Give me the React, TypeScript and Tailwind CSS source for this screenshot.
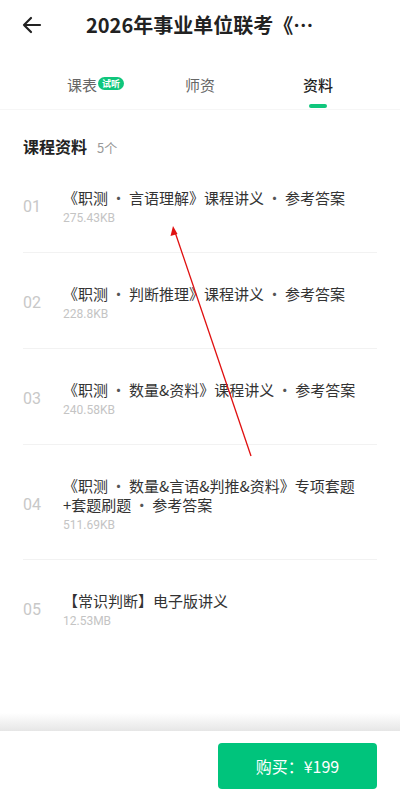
import React from "react";

const items = [
  { no: "01", lines: ["《职测 · 言语理解》课程讲义 · 参考答案"], size: "275.43KB" },
  { no: "02", lines: ["《职测 · 判断推理》课程讲义 · 参考答案"], size: "228.8KB" },
  { no: "03", lines: ["《职测 · 数量&资料》课程讲义 · 参考答案"], size: "240.58KB" },
  { no: "04", lines: ["《职测 · 数量&言语&判推&资料》专项套题", "+套题刷题 · 参考答案"], size: "511.69KB" },
  { no: "05", lines: ["【常识判断】电子版讲义"], size: "12.53MB" },
];

const font = { fontFamily: '"Noto Sans CJK SC", "Noto Sans", sans-serif' };
const numFont = { fontFamily: 'Roboto, "Noto Sans", sans-serif' };

// render the separator dot with a small fixed gap on each side
function Title({ text }: { text: string }) {
  const parts = text.split(" · ");
  return (
    <>
      {parts.map((p, i) => (
        <React.Fragment key={i}>
          {i > 0 && <span className="mx-[3px] text-[#555]">·</span>}
          {p}
        </React.Fragment>
      ))}
    </>
  );
}

export default function App() {
  return (
    <div className="relative w-[400px] h-[793px] bg-white overflow-hidden flex flex-col" style={font}>
      {/* header */}
      <div className="h-[50px] flex items-center px-[20px] shrink-0">
        <svg width="24" height="24" viewBox="0 0 24 24" fill="none" stroke="#222" strokeWidth="2.2" strokeLinecap="round" strokeLinejoin="round">
          <path d="M20 12H4M11 5l-7 7 7 7" />
        </svg>
        <div className="ml-[42px] text-[20px] font-bold text-[#222] leading-[28px]">2026年事业单位联考《…</div>
      </div>

      {/* tabs */}
      <div className="h-[60px] shrink-0 border-b border-[#f6f6f6] flex flex-col justify-end">
        <div className="flex items-center h-[24px] pl-[67px]">
          <span className="text-[15px] text-[#666] leading-[24px]">课表</span>
          <span className="ml-[1px] -mt-[4px] h-[13px] px-[4px] rounded-full bg-[#10c67c] text-white text-[9px] leading-[13px] font-bold">试听</span>
          <span className="ml-[61px] text-[15px] text-[#666] leading-[24px]">师资</span>
          <span className="ml-[88px] text-[15px] text-[#222] font-medium leading-[24px]">资料</span>
        </div>
        <div className="flex h-[4px] mt-[7px] mb-[1px] pl-[309px]">
          <div className="w-[18px] h-[4px] rounded-full bg-[#10c67c]" />
        </div>
      </div>

      {/* content */}
      <div className="flex-1 px-[23px]">
        <div className="flex items-baseline mt-[25px] h-[22px]">
          <span className="text-[16px] font-bold text-[#222] leading-[22px]">课程资料</span>
          <span className="ml-[10px] text-[13px] text-[#999] leading-[22px]">5个</span>
        </div>
        <div>
          {items.map((it, i) => (
            <div
              key={it.no}
              className={`flex items-center pt-[31px] pb-[26px] ${i < items.length - 1 ? "border-b border-[#f2f2f2]" : ""}`}
            >
              <div className="w-[40px] shrink-0 text-[16px] text-[#c8c8c8]" style={numFont}>{it.no}</div>
              <div className="flex-1">
                {it.lines.map((l) => (
                  <div key={l} className="text-[15px] text-[#333] leading-[19px] whitespace-nowrap">
                    <Title text={l} />
                  </div>
                ))}
                <div className="mt-[3px] text-[12px] text-[#c4c4c4] leading-[16px]" style={numFont}>{it.size}</div>
              </div>
            </div>
          ))}
        </div>
      </div>

      {/* bottom bar */}
      <div className="h-[18px] shrink-0 bg-gradient-to-b from-white to-[#e6e6e6]" />
      <div className="h-[62px] shrink-0 bg-white flex items-start justify-end px-[23px] pt-[12px]">
        <button className="w-[159px] h-[46px] rounded-[4px] bg-[#00c47c] text-white text-[16px]">购买：¥199</button>
      </div>

      {/* annotation arrow */}
      <svg className="absolute left-0 top-0 pointer-events-none" width="400" height="793">
        <line x1="251" y1="456" x2="175" y2="232" stroke="#e01010" strokeWidth="1.3" />
        <polygon points="173,226 170.5,236 177.5,234" fill="#e01010" />
      </svg>
    </div>
  );
}
